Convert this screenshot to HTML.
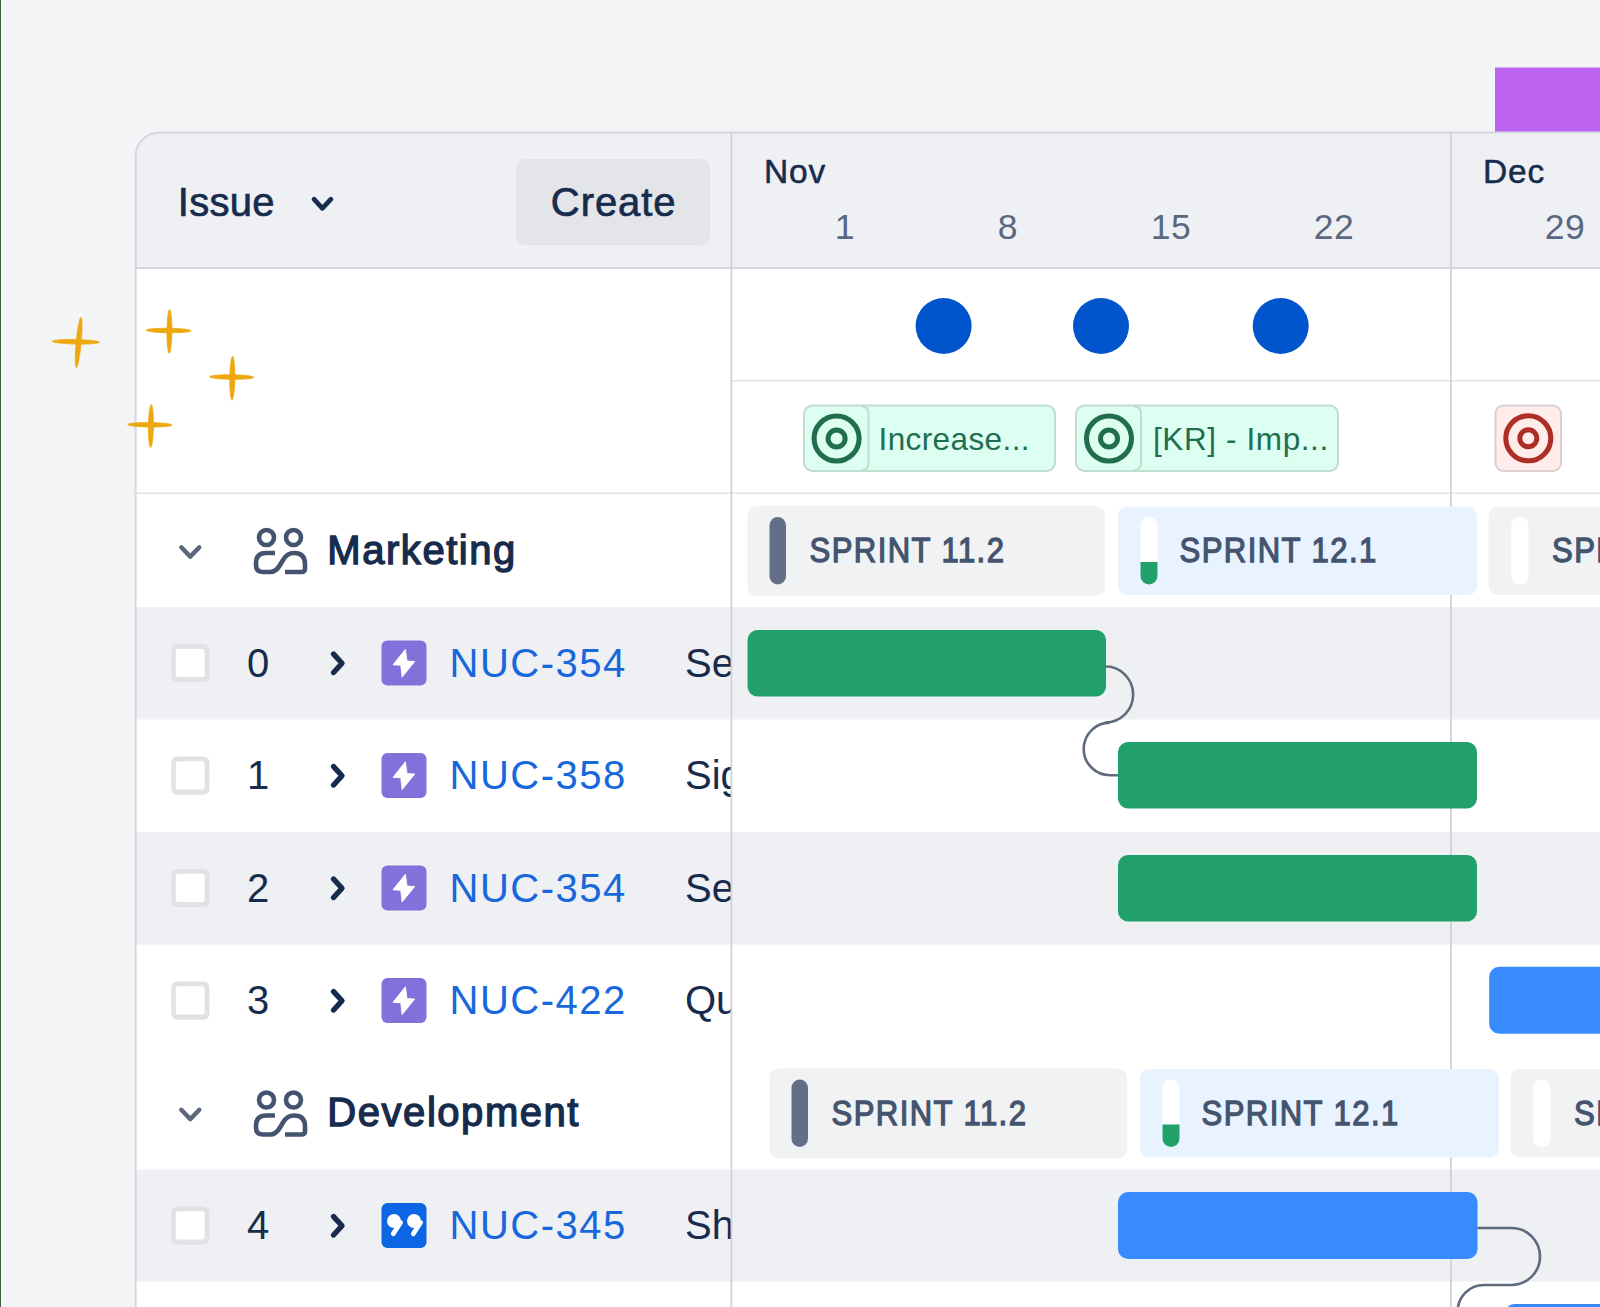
<!DOCTYPE html>
<html><head><meta charset="utf-8">
<style>
html,body{margin:0;padding:0;width:1600px;height:1307px;overflow:hidden;background:#f3f4f6;}
svg{position:absolute;left:0;top:0;display:block;}
text{font-family:"Liberation Sans",sans-serif;}
</style></head>
<body>
<svg width="1600" height="1307" viewBox="0 0 1600 1307">
<defs><clipPath id="lc"><rect x="136" y="268" width="594.5" height="1039"/></clipPath></defs>
<rect x="0" y="0" width="1600" height="1307" fill="#f3f4f6"/>
<rect x="0" y="0" width="1.15" height="1307" fill="#36663e"/>
<rect x="1.3" y="0" width="1" height="1307" fill="#ffffff"/>
<rect x="1495" y="67.5" width="105" height="64.5" fill="#bc63f2"/>
<path d="M135 1307 V156.5 A24 24 0 0 1 159 132.5 H1600 V1307 Z" fill="#ffffff"/>
<path d="M135 268 V156.5 A24 24 0 0 1 159 132.5 H1600 V268 Z" fill="#eff0f3"/>
<rect x="136" y="607" width="1464" height="112.5" fill="#eff0f3"/>
<rect x="136" y="832" width="1464" height="112.5" fill="#eff0f3"/>
<rect x="136" y="1169.5" width="1464" height="112" fill="#eff0f3"/>
<path d="M135.6 1307 V156.5 A24 24 0 0 1 159.6 132.5 H1600" fill="none" stroke="#d5d8de" stroke-width="2"/>
<rect x="135" y="267" width="1465" height="2" fill="#d3d6dc"/>
<rect x="731" y="380" width="869" height="1.5" fill="#e2e4e8"/>
<rect x="135" y="492.5" width="1465" height="1.5" fill="#e2e4e8"/>
<rect x="730.5" y="132" width="1.8" height="1175" fill="#cfd2d8"/>
<rect x="1450" y="132" width="1.8" height="1175" fill="#cfd2d8"/>

<text x="177.8" y="216" font-size="40" fill="#172b4d" stroke="#172b4d" stroke-width="0.7" letter-spacing="0.25">Issue</text>
<path d="M314 199.2 L322.4 208.3 L330.9 199.2" fill="none" stroke="#172b4d" stroke-width="4.7" stroke-linecap="round" stroke-linejoin="round"/>
<rect x="516" y="159" width="194" height="86" rx="9" fill="#e3e5e9"/>
<text x="550.8" y="216" font-size="40" fill="#172b4d" stroke="#172b4d" stroke-width="0.7" letter-spacing="0.95">Create</text>
<text x="764" y="182.5" font-size="33.5" fill="#172b4d" stroke="#172b4d" stroke-width="0.5" letter-spacing="0.9">Nov</text>
<text x="1483" y="182.5" font-size="33.5" fill="#172b4d" stroke="#172b4d" stroke-width="0.5" letter-spacing="0.9">Dec</text>
<g font-size="35.5" fill="#5a687f" text-anchor="middle" letter-spacing="0.6">
<text x="845" y="239">1</text>
<text x="1008" y="239">8</text>
<text x="1171" y="239">15</text>
<text x="1334" y="239">22</text>
<text x="1565" y="239">29</text>
</g>
<g fill="#0055cc"><circle cx="943.6" cy="326" r="28"/><circle cx="1101" cy="326" r="28"/><circle cx="1280.7" cy="326" r="28"/></g>
<rect x="804" y="405.5" width="251" height="65.5" rx="8.5" fill="#dcfff1" stroke="#c2dcd0" stroke-width="2"/>
<path d="M861.5 406.5 Q868.5 406.5 868.5 413.5 V463 Q868.5 470 861.5 470" fill="none" stroke="#c2dcd0" stroke-width="2"/>
<circle cx="836.6" cy="438.5" r="22.5" fill="none" stroke="#216e4e" stroke-width="5.1"/><circle cx="836.6" cy="438.5" r="8.5" fill="none" stroke="#216e4e" stroke-width="5"/>
<text x="878.5" y="449.5" font-size="31.5" fill="#216e4e" letter-spacing="0.4">Increase...</text>
<rect x="1076" y="405.5" width="262" height="65.5" rx="8.5" fill="#dcfff1" stroke="#c2dcd0" stroke-width="2"/>
<path d="M1134 406.5 Q1141 406.5 1141 413.5 V463 Q1141 470 1134 470" fill="none" stroke="#c2dcd0" stroke-width="2"/>
<circle cx="1109" cy="438.5" r="22.5" fill="none" stroke="#216e4e" stroke-width="5.1"/><circle cx="1109" cy="438.5" r="8.5" fill="none" stroke="#216e4e" stroke-width="5"/>
<text x="1153" y="449.5" font-size="31.5" fill="#216e4e" letter-spacing="0.6">[KR] - Imp...</text>
<rect x="1495.5" y="405.5" width="65.5" height="65.5" rx="8" fill="#ffeceb" stroke="#dccfd0" stroke-width="2"/>
<circle cx="1528.3" cy="438.3" r="22.5" fill="none" stroke="#ad2e25" stroke-width="5.1"/><circle cx="1528.3" cy="438.3" r="8.5" fill="none" stroke="#ad2e25" stroke-width="5"/>
<g fill="#eea80f" stroke="#eea80f" stroke-width="0.8" stroke-linejoin="round">
<path d="M81.00 317.20 C77.43 319.92 73.30 364.36 76.30 367.70 C79.87 364.98 84.00 320.54 81.00 317.20 Z"/><path d="M52.20 341.30 C54.97 344.36 96.60 345.24 99.50 342.30 C96.73 339.24 55.10 338.36 52.20 341.30 Z"/>
<path d="M169.60 309.50 C166.28 312.10 165.92 350.74 169.20 353.40 C172.52 350.80 172.88 312.16 169.60 309.50 Z"/><path d="M146.00 330.20 C148.67 333.24 188.35 333.76 191.10 330.80 C188.43 327.76 148.75 327.24 146.00 330.20 Z"/>
<path d="M232.60 356.30 C229.26 358.89 228.74 397.52 232.00 400.20 C235.34 397.61 235.86 358.98 232.60 356.30 Z"/><path d="M209.50 376.80 C212.14 379.83 251.30 380.27 254.00 377.30 C251.36 374.27 212.20 373.83 209.50 376.80 Z"/>
<path d="M151.20 404.40 C147.86 406.95 147.34 444.96 150.60 447.60 C153.94 445.05 154.46 407.04 151.20 404.40 Z"/><path d="M127.70 424.50 C130.33 427.54 169.49 428.06 172.20 425.10 C169.57 422.06 130.41 421.54 127.70 424.50 Z"/>
</g>
<g transform="translate(0,605.5)">
<rect x="171.3" y="38.6" width="38.2" height="38.2" rx="6" fill="#e0e2e6"/><rect x="175.8" y="43.3" width="28.8" height="28.2" rx="2.5" fill="#ffffff"/>
<text x="247" y="71.2" font-size="40" fill="#172b4d">0</text>
<path d="M333.6 48.6 L342 57.8 L333.6 67" fill="none" stroke="#172b4d" stroke-width="5.4" stroke-linecap="round" stroke-linejoin="round"/>
<rect x="381.5" y="35" width="45" height="45" rx="6" fill="#8270db"/>
<path d="M405.4 43.8 L393 59.3 L400.8 59.8 L402.1 71.6 L414.7 56.1 L407 55.5 Z" fill="#ffffff" stroke="#ffffff" stroke-width="0.9" stroke-linejoin="round"/>
<text x="449.5" y="71.2" font-size="40" fill="#1868db" letter-spacing="1.5">NUC-354</text>
</g>
<text x="685" y="676.7" font-size="40" fill="#172b4d" clip-path="url(#lc)">Se</text>
<g transform="translate(0,718)">
<rect x="171.3" y="38.6" width="38.2" height="38.2" rx="6" fill="#e0e2e6"/><rect x="175.8" y="43.3" width="28.8" height="28.2" rx="2.5" fill="#ffffff"/>
<text x="247" y="71.2" font-size="40" fill="#172b4d">1</text>
<path d="M333.6 48.6 L342 57.8 L333.6 67" fill="none" stroke="#172b4d" stroke-width="5.4" stroke-linecap="round" stroke-linejoin="round"/>
<rect x="381.5" y="35" width="45" height="45" rx="6" fill="#8270db"/>
<path d="M405.4 43.8 L393 59.3 L400.8 59.8 L402.1 71.6 L414.7 56.1 L407 55.5 Z" fill="#ffffff" stroke="#ffffff" stroke-width="0.9" stroke-linejoin="round"/>
<text x="449.5" y="71.2" font-size="40" fill="#1868db" letter-spacing="1.5">NUC-358</text>
</g>
<text x="685" y="789.2" font-size="40" fill="#172b4d" clip-path="url(#lc)">Sig</text>
<g transform="translate(0,830.5)">
<rect x="171.3" y="38.6" width="38.2" height="38.2" rx="6" fill="#e0e2e6"/><rect x="175.8" y="43.3" width="28.8" height="28.2" rx="2.5" fill="#ffffff"/>
<text x="247" y="71.2" font-size="40" fill="#172b4d">2</text>
<path d="M333.6 48.6 L342 57.8 L333.6 67" fill="none" stroke="#172b4d" stroke-width="5.4" stroke-linecap="round" stroke-linejoin="round"/>
<rect x="381.5" y="35" width="45" height="45" rx="6" fill="#8270db"/>
<path d="M405.4 43.8 L393 59.3 L400.8 59.8 L402.1 71.6 L414.7 56.1 L407 55.5 Z" fill="#ffffff" stroke="#ffffff" stroke-width="0.9" stroke-linejoin="round"/>
<text x="449.5" y="71.2" font-size="40" fill="#1868db" letter-spacing="1.5">NUC-354</text>
</g>
<text x="685" y="901.7" font-size="40" fill="#172b4d" clip-path="url(#lc)">Se</text>
<g transform="translate(0,943)">
<rect x="171.3" y="38.6" width="38.2" height="38.2" rx="6" fill="#e0e2e6"/><rect x="175.8" y="43.3" width="28.8" height="28.2" rx="2.5" fill="#ffffff"/>
<text x="247" y="71.2" font-size="40" fill="#172b4d">3</text>
<path d="M333.6 48.6 L342 57.8 L333.6 67" fill="none" stroke="#172b4d" stroke-width="5.4" stroke-linecap="round" stroke-linejoin="round"/>
<rect x="381.5" y="35" width="45" height="45" rx="6" fill="#8270db"/>
<path d="M405.4 43.8 L393 59.3 L400.8 59.8 L402.1 71.6 L414.7 56.1 L407 55.5 Z" fill="#ffffff" stroke="#ffffff" stroke-width="0.9" stroke-linejoin="round"/>
<text x="449.5" y="71.2" font-size="40" fill="#1868db" letter-spacing="1.5">NUC-422</text>
</g>
<text x="685" y="1014.2" font-size="40" fill="#172b4d" clip-path="url(#lc)">Qu</text>
<g transform="translate(0,1168)">
<rect x="171.3" y="38.6" width="38.2" height="38.2" rx="6" fill="#e0e2e6"/><rect x="175.8" y="43.3" width="28.8" height="28.2" rx="2.5" fill="#ffffff"/>
<text x="247" y="71.2" font-size="40" fill="#172b4d">4</text>
<path d="M333.6 48.6 L342 57.8 L333.6 67" fill="none" stroke="#172b4d" stroke-width="5.4" stroke-linecap="round" stroke-linejoin="round"/>
<rect x="381.5" y="35" width="45" height="45" rx="6" fill="#0c66e4"/>
<g fill="#ffffff"><circle cx="394" cy="53" r="7"/><circle cx="414" cy="53" r="7"/></g>
<g stroke="#ffffff" stroke-width="4.8" stroke-linecap="round"><path d="M400.6 54.5 L393.3 65.8"/><path d="M420.6 54.5 L413.3 65.8"/></g>
<text x="449.5" y="71.2" font-size="40" fill="#1868db" letter-spacing="1.5">NUC-345</text>
</g>
<text x="685" y="1239.2" font-size="40" fill="#172b4d" clip-path="url(#lc)">Sh</text>
<g transform="translate(0,493)">
<path d="M181.3 54.3 L190.3 63.6 L199.3 54.3" fill="none" stroke="#5b677b" stroke-width="4.4" stroke-linecap="round" stroke-linejoin="round"/>
<g fill="none" stroke="#44546f" stroke-width="4.6" stroke-linecap="butt">
<circle cx="266.5" cy="44.5" r="7.5"/><circle cx="293.5" cy="44.5" r="7.5"/>
<path d="M275 60 H266 Q256 60 256 70 V72 Q256 79 263 79 H270 Q276 79 280 72 L283 67 Q287 60 294 60 Q305 60 305 71 V75.5 Q305 79 301.5 79 H285"/>
</g>
<text x="327.3" y="70.8" font-size="40" fill="#172b4d" stroke="#172b4d" stroke-width="1.35" letter-spacing="1.55">Marketing</text>
</g>
<g transform="translate(0,1055.5)">
<path d="M181.3 54.3 L190.3 63.6 L199.3 54.3" fill="none" stroke="#5b677b" stroke-width="4.4" stroke-linecap="round" stroke-linejoin="round"/>
<g fill="none" stroke="#44546f" stroke-width="4.6" stroke-linecap="butt">
<circle cx="266.5" cy="44.5" r="7.5"/><circle cx="293.5" cy="44.5" r="7.5"/>
<path d="M275 60 H266 Q256 60 256 70 V72 Q256 79 263 79 H270 Q276 79 280 72 L283 67 Q287 60 294 60 Q305 60 305 71 V75.5 Q305 79 301.5 79 H285"/>
</g>
<text x="327.3" y="70.8" font-size="40" fill="#172b4d" stroke="#172b4d" stroke-width="1.35" letter-spacing="1.55">Development</text>
</g>
<g transform="translate(0,493)">
<rect x="747.5" y="13" width="357.5" height="90" rx="9" fill="#f1f2f4"/>
<rect x="769.5" y="24" width="16.5" height="67.5" rx="8.25" fill="#626f86"/>
<text transform="translate(809.5,69) scale(0.9,1)" font-size="34.5" fill="#44546f" stroke="#44546f" stroke-width="1.3" letter-spacing="1.6">SPRINT 11.2</text>
<rect x="1118" y="13.5" width="359" height="88.5" rx="9" fill="#e9f2ff"/>
<rect x="1140.5" y="24" width="17" height="67.5" rx="8.5" fill="#ffffff"/>
<path d="M1140.5 69 H1157.5 V83 A8.5 8.5 0 0 1 1140.5 83 Z" fill="#22a06b"/>
<text transform="translate(1179.5,69) scale(0.9,1)" font-size="34.5" fill="#44546f" stroke="#44546f" stroke-width="1.3" letter-spacing="1.6">SPRINT 12.1</text>
<rect x="1488.5" y="13.5" width="200" height="88.5" rx="9" fill="#f1f2f4"/>
<rect x="1511" y="24" width="17.5" height="67.5" rx="8.75" fill="#ffffff"/>
<text transform="translate(1552,69) scale(0.9,1)" font-size="34.5" fill="#44546f" stroke="#44546f" stroke-width="1.3" letter-spacing="1.6">SPRINT 13.1</text>
</g>
<g transform="translate(22,1055.5)">
<rect x="747.5" y="13" width="357.5" height="90" rx="9" fill="#f1f2f4"/>
<rect x="769.5" y="24" width="16.5" height="67.5" rx="8.25" fill="#626f86"/>
<text transform="translate(809.5,69) scale(0.9,1)" font-size="34.5" fill="#44546f" stroke="#44546f" stroke-width="1.3" letter-spacing="1.6">SPRINT 11.2</text>
<rect x="1118" y="13.5" width="359" height="88.5" rx="9" fill="#e9f2ff"/>
<rect x="1140.5" y="24" width="17" height="67.5" rx="8.5" fill="#ffffff"/>
<path d="M1140.5 69 H1157.5 V83 A8.5 8.5 0 0 1 1140.5 83 Z" fill="#22a06b"/>
<text transform="translate(1179.5,69) scale(0.9,1)" font-size="34.5" fill="#44546f" stroke="#44546f" stroke-width="1.3" letter-spacing="1.6">SPRINT 12.1</text>
<rect x="1488.5" y="13.5" width="200" height="88.5" rx="9" fill="#f1f2f4"/>
<rect x="1511" y="24" width="17.5" height="67.5" rx="8.75" fill="#ffffff"/>
<text transform="translate(1552,69) scale(0.9,1)" font-size="34.5" fill="#44546f" stroke="#44546f" stroke-width="1.3" letter-spacing="1.6">SPRINT 13.1</text>
</g>
<rect x="747.5" y="630" width="358.5" height="66.5" rx="10" fill="#22a06b"/>
<rect x="1118" y="742" width="359" height="66.5" rx="10" fill="#22a06b"/>
<rect x="1118" y="855" width="359" height="66.5" rx="10" fill="#22a06b"/>
<rect x="1489.2" y="966.8" width="200" height="67" rx="10" fill="#388bff"/>
<rect x="1118" y="1192" width="359.5" height="67" rx="10" fill="#388bff"/>
<rect x="1504.5" y="1304" width="200" height="67" rx="10" fill="#388bff"/>
<path d="M1106 666.3 H1105 A28.15 28.15 0 0 1 1105 722.6 H1110 A26.3 26.3 0 0 0 1110 775.2 H1118" fill="none" stroke="#5f6a7d" stroke-width="2.6"/>
<path d="M1477.5 1228 H1511.5 A28.5 28.5 0 0 1 1511.5 1285 H1484 A26.3 26.3 0 0 0 1457.7 1311.3" fill="none" stroke="#5f6a7d" stroke-width="2.6"/>
</svg>
</body></html>
